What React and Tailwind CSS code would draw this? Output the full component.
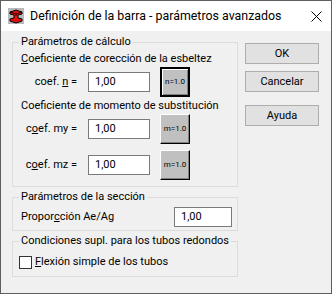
import React from "react";

const BeamIcon = () => (
  <svg width="16" height="16" viewBox="0 0 16 16">
    <rect x="0" y="0" width="16" height="16" fill="#b9b9b9" />
    <path d="M2 4 L8 2 L14 4 L14 6 L10 7 L10 10 L14 11 L14 13 L8 15 L2 13 L2 11 L6 10 L6 7 L2 6 Z" fill="#e01010" stroke="#000" strokeWidth="1" strokeLinejoin="round" />
    <path d="M2 4 L8 6 L14 4 M8 6 L8 8" fill="none" stroke="#000" strokeWidth="0.8" />
  </svg>
);

const CoefButton = ({ label, active }) => (
  <button
    type="button"
    className={
      active
        ? "w-[30px] h-[30px] shrink-0 flex items-center justify-center bg-[#c0c0c0] border-2 border-black shadow-[inset_1px_1px_0_#fff,inset_-1px_-1px_0_#808080] text-[8px] leading-none"
        : "w-[30px] h-[30px] shrink-0 flex items-center justify-center bg-[#c0c0c0] border border-t-white border-l-white border-b-black border-r-black shadow-[inset_-1px_-1px_0_#808080] text-[8px] leading-none"
    }
  >
    {label}
  </button>
);

const CoefRow = ({ label, value, btn, active }) => (
  <div className="h-[32px] flex items-center">
    <span className="w-[56px] text-right whitespace-nowrap">{label}</span>
    <div className="ml-[11px] w-[62px] h-[20px] bg-white border border-[#7a7a7a] flex items-center pl-[6px]">
      {value}
    </div>
    <div className="ml-[10px]">
      <CoefButton label={btn} active={active} />
    </div>
  </div>
);

const WinButton = ({ children, className = "" }) => (
  <button
    type="button"
    className={`w-[74px] h-[21px] bg-[#e1e1e1] border border-[#adadad] ${className}`}
  >
    {children}
  </button>
);

export default function App() {
  return (
    <div className="w-[332px] h-[294px] border border-[#5f5f5f] bg-[#f0f0f0] flex flex-col font-['Roboto',sans-serif] text-[11px] leading-[14px] text-black">
      <div className="h-[30px] bg-white flex items-center pl-[7px] pr-[9px] shrink-0">
        <BeamIcon />
        <span className="ml-[6px] text-[12.4px] flex-1">
          Definición de la barra - parámetros avanzados
        </span>
        <svg width="11" height="11" viewBox="0 0 11 11">
          <path d="M0.5 0.5 L10.5 10.5 M10.5 0.5 L0.5 10.5" stroke="#000" strokeWidth="1" />
        </svg>
      </div>

      <div className="flex pl-[11px] pt-[3px]">
        <div className="w-[226px] flex flex-col">
          <fieldset className="border border-[#dcdcdc] pl-[8px] pb-[5px]">
            <legend className="-ml-[2px] px-[2px] leading-[16px]">Parámetros de cálculo</legend>
            <div className="mt-[2px]">
              <u>C</u>oeficiente de corección de la esbeltez
            </div>
            <CoefRow
              label={<>coef. <u>n</u> =</>}
              value="1,00"
              btn="n=1.0"
              active
            />
            <div className="mt-[1px]">Coeficiente de momento de substitución</div>
            <CoefRow label={<>c<u>o</u>ef. my =</>} value="1,00" btn="m=1.0" />
            <div className="mt-[4px]">
              <CoefRow label={<>c<u>o</u>ef. mz =</>} value="1,00" btn="m=1.0" />
            </div>
          </fieldset>

          <fieldset className="mt-[2px] border border-[#dcdcdc] pl-[8px] pr-[5px] pb-[3px]">
            <legend className="-ml-[2px] px-[2px] leading-[16px]">Parámetros de la sección</legend>
            <div className="mt-[2px] h-[20px] flex items-center justify-between">
              <span>
                Propor<u>c</u>ción Ae/Ag
              </span>
              <div className="w-[58px] h-[20px] bg-white border border-[#7a7a7a] flex items-center pl-[6px]">
                1,00
              </div>
            </div>
          </fieldset>

          <fieldset className="mt-[2px] border border-[#dcdcdc] pl-[6px] pb-[6px]">
            <legend className="px-[2px] leading-[16px] whitespace-nowrap">
              Condiciones supl. para los tubos redondos
            </legend>
            <div className="mt-[5px] h-[16px] flex items-center">
              <span className="w-[13px] h-[13px] bg-white border border-[#333333]" />
              <span className="ml-[3px]">
                <u>F</u>lexión simple de los tubos
              </span>
            </div>
          </fieldset>
        </div>

        <div className="ml-[7px] pt-[9px] flex flex-col">
          <WinButton>OK</WinButton>
          <WinButton className="mt-[7px]">Cancelar</WinButton>
          <WinButton className="mt-[13px]">Ayuda</WinButton>
        </div>
      </div>
    </div>
  );
}
